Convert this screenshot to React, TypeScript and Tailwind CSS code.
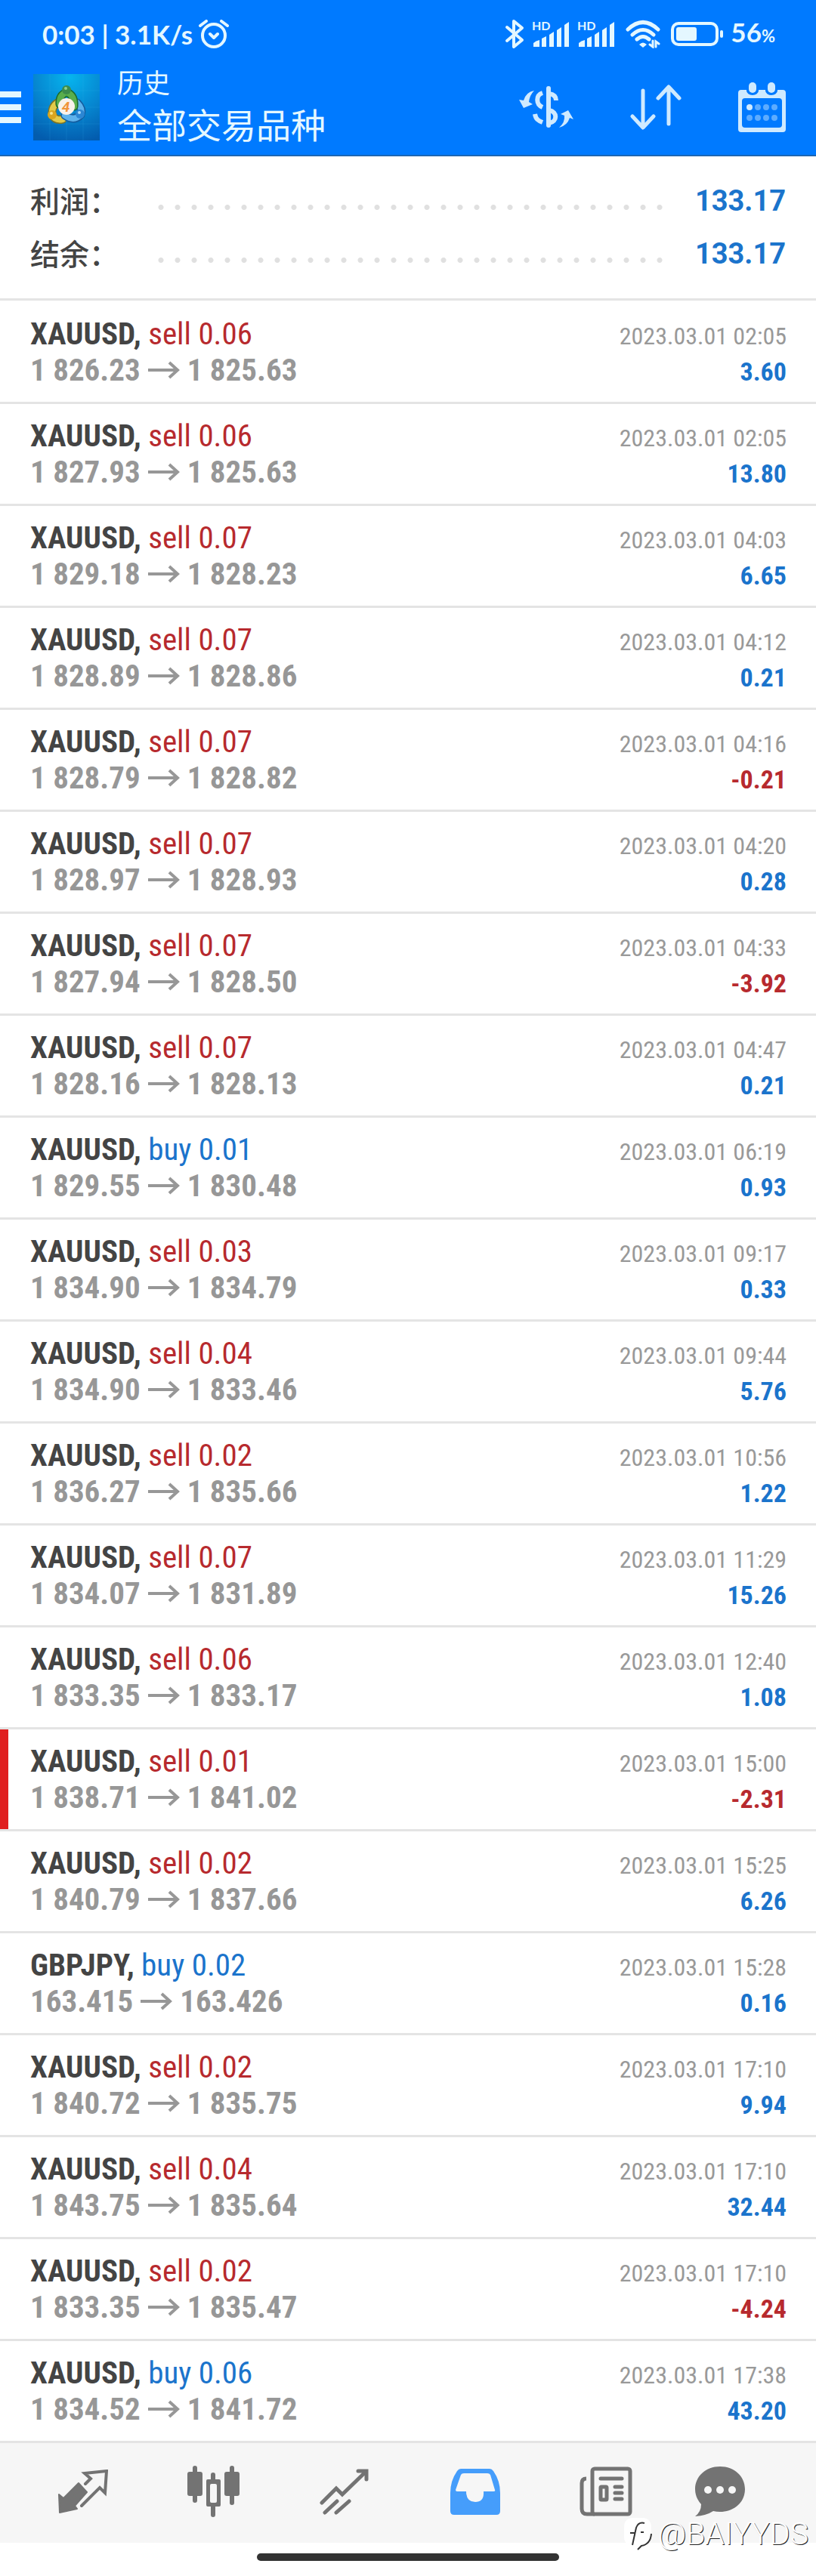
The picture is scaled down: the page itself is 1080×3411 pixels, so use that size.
import React from "react";

interface Deal {
  symbol: string;
  side: "buy" | "sell";
  volume: string;
  open: string;
  close: string;
  time: string;
  profit: string;
  stopped?: boolean;
}

const DEALS: Deal[] = [
  { symbol: "XAUUSD", side: "sell", volume: "0.06", open: "1 826.23", close: "1 825.63", time: "2023.03.01 02:05", profit: "3.60" },
  { symbol: "XAUUSD", side: "sell", volume: "0.06", open: "1 827.93", close: "1 825.63", time: "2023.03.01 02:05", profit: "13.80" },
  { symbol: "XAUUSD", side: "sell", volume: "0.07", open: "1 829.18", close: "1 828.23", time: "2023.03.01 04:03", profit: "6.65" },
  { symbol: "XAUUSD", side: "sell", volume: "0.07", open: "1 828.89", close: "1 828.86", time: "2023.03.01 04:12", profit: "0.21" },
  { symbol: "XAUUSD", side: "sell", volume: "0.07", open: "1 828.79", close: "1 828.82", time: "2023.03.01 04:16", profit: "-0.21" },
  { symbol: "XAUUSD", side: "sell", volume: "0.07", open: "1 828.97", close: "1 828.93", time: "2023.03.01 04:20", profit: "0.28" },
  { symbol: "XAUUSD", side: "sell", volume: "0.07", open: "1 827.94", close: "1 828.50", time: "2023.03.01 04:33", profit: "-3.92" },
  { symbol: "XAUUSD", side: "sell", volume: "0.07", open: "1 828.16", close: "1 828.13", time: "2023.03.01 04:47", profit: "0.21" },
  { symbol: "XAUUSD", side: "buy", volume: "0.01", open: "1 829.55", close: "1 830.48", time: "2023.03.01 06:19", profit: "0.93" },
  { symbol: "XAUUSD", side: "sell", volume: "0.03", open: "1 834.90", close: "1 834.79", time: "2023.03.01 09:17", profit: "0.33" },
  { symbol: "XAUUSD", side: "sell", volume: "0.04", open: "1 834.90", close: "1 833.46", time: "2023.03.01 09:44", profit: "5.76" },
  { symbol: "XAUUSD", side: "sell", volume: "0.02", open: "1 836.27", close: "1 835.66", time: "2023.03.01 10:56", profit: "1.22" },
  { symbol: "XAUUSD", side: "sell", volume: "0.07", open: "1 834.07", close: "1 831.89", time: "2023.03.01 11:29", profit: "15.26" },
  { symbol: "XAUUSD", side: "sell", volume: "0.06", open: "1 833.35", close: "1 833.17", time: "2023.03.01 12:40", profit: "1.08" },
  { symbol: "XAUUSD", side: "sell", volume: "0.01", open: "1 838.71", close: "1 841.02", time: "2023.03.01 15:00", profit: "-2.31", stopped: true },
  { symbol: "XAUUSD", side: "sell", volume: "0.02", open: "1 840.79", close: "1 837.66", time: "2023.03.01 15:25", profit: "6.26" },
  { symbol: "GBPJPY", side: "buy", volume: "0.02", open: "163.415", close: "163.426", time: "2023.03.01 15:28", profit: "0.16" },
  { symbol: "XAUUSD", side: "sell", volume: "0.02", open: "1 840.72", close: "1 835.75", time: "2023.03.01 17:10", profit: "9.94" },
  { symbol: "XAUUSD", side: "sell", volume: "0.04", open: "1 843.75", close: "1 835.64", time: "2023.03.01 17:10", profit: "32.44" },
  { symbol: "XAUUSD", side: "sell", volume: "0.02", open: "1 833.35", close: "1 835.47", time: "2023.03.01 17:10", profit: "-4.24" },
  { symbol: "XAUUSD", side: "buy", volume: "0.06", open: "1 834.52", close: "1 841.72", time: "2023.03.01 17:38", profit: "43.20" },
];

export default function App() {
  return (
    <div className="relative w-full bg-white font-[Roboto,'Noto_Sans_CJK_SC',sans-serif]">
      <header className="border-b-2 border-[#1c66b3] bg-[#007aff] text-[#e4f7ff]">
        <StatusBar />
        <TitleBar />
      </header>

      <main>
        {/* Totals */}
        <dl className="border-b-3 border-[#e4e4e4] py-6 pr-10 pl-10">
          <SummaryLine label="利润：" value="133.17" />
          <SummaryLine label="结余：" value="133.17" />
        </dl>

        <ul className="pt-0.5 font-['Roboto_Condensed','Liberation_Sans_Narrow',Roboto,sans-serif]">
          {DEALS.map((deal, i) => (
            <DealRow key={i} deal={deal} />
          ))}
        </ul>
      </main>

      <TabBar />

      {/* Gesture bar */}
      <div className="flex h-11 justify-center pt-[14px]">
        <div className="h-[10px] w-[400px] rounded-full bg-[#333333]" />
      </div>

      <Watermark />
    </div>
  );
}

function StatusBar() {
  return (
    <div className="flex h-[90px] items-center justify-between pr-[54px] pl-14">
      <div className="flex items-center gap-2 font-[Lato] text-[35px] leading-10 font-bold">
        <span>0:03 | 3.1K/s</span>
        <svg width="40" height="38" viewBox="0 0 40 38" fill="none" stroke="currentColor" strokeWidth="4" strokeLinecap="round" strokeLinejoin="round">
          <circle cx="20" cy="21" r="15" />
          <path d="M15 19l5 5 5-5M2 8l8-6M38 8l-8-6" />
        </svg>
      </div>

      <div className="flex items-center gap-[10px]">
        <svg width="26" height="40" viewBox="0 0 26 40" fill="none" stroke="currentColor" strokeWidth="4" strokeLinecap="round" strokeLinejoin="round">
          <path d="M3 11l20 17-11 9V3l11 9L3 29" />
        </svg>
        <SignalIcon />
        <SignalIcon />
        <svg className="ml-1" width="46" height="38" viewBox="0 0 46 38" fill="none" stroke="currentColor" strokeWidth="5" strokeLinecap="round">
          <path d="M3 13Q23 -6 43 13M9 20Q23 7 37 20M15 26Q23 19 31 26" />
          <path d="M18 33q5-5 10 0l-5 4z" fill="currentColor" stroke="none" />
          <path d="M36 28v8l-4-3M40 36v-7l4 3" strokeWidth="3" />
        </svg>
        <svg className="ml-1" width="69" height="32" viewBox="0 0 69 32">
          <rect x="2" y="2" width="59" height="28" rx="8" fill="none" stroke="currentColor" strokeWidth="4" />
          <rect x="7" y="7" width="27" height="18" rx="3" fill="currentColor" />
          <rect x="65" y="11" width="4" height="10" rx="2" fill="currentColor" />
        </svg>
        <span className="font-[Lato] text-[35px] leading-10 font-bold">
          56<span className="text-[22px]">%</span>
        </span>
      </div>
    </div>
  );
}

function SignalIcon() {
  return (
    <svg width="50" height="46" viewBox="0 -6 50 46" fill="currentColor">
      <text x="0" y="12" fontFamily="Lato" fontWeight="700" fontSize="16">HD</text>
      <path d="M2 34V29q3-3 8-4v9zM13 34V23l6-3v14zM23 34V18l6-4v20zM33 34V12l6-4v26zM43 34V5l6-4v33z" />
    </svg>
  );
}

function TitleBar() {
  return (
    <div className="flex h-[115px] items-center pr-10 pb-3">
      <button aria-label="Menu" className="flex w-7 flex-col gap-[9px]">
        <span className="h-2 w-full bg-current" />
        <span className="h-2 w-full bg-current" />
        <span className="h-2 w-full bg-current" />
      </button>
      <AppLogo />
      <div className="ml-[23px] flex flex-1 flex-col pb-2 font-['Noto_Sans_CJK_SC',sans-serif]">
        <span className="text-[35px] leading-[50px]">历史</span>
        <h1 className="text-[46px] leading-[60px]">全部交易品种</h1>
      </div>
      <div className="flex items-center gap-[75px] text-[#cfeaff]">
        <button aria-label="Currency">
          <svg width="72" height="56" viewBox="0 0 72 56" fill="none" stroke="currentColor" strokeWidth="6">
            <path d="M39 3v49" strokeLinecap="round" />
            <path d="M40 10C46 11 49 14 49 19" />
            <path d="M40 32C51 34 51 47 40 49" />
            <path d="M31 9C22 12 22 24 31 28M21 37C22 44 26 46 31 48" />
            <path d="M0 18l6 11 12-5-5-3Q14 12 20 6 9 8 6 19zM53 55Q61 48 60 39l-5-2 10-5 7 12-5-2Q64 52 53 55z" fill="currentColor" stroke="none" />
          </svg>
        </button>
        <button aria-label="Sort">
          <svg width="68" height="60" viewBox="0 0 68 60" fill="none" stroke="currentColor" strokeWidth="5" strokeLinecap="round" strokeLinejoin="round">
            <path d="M17 8v48M3 42l14 15 14-15M51 52V4M37 18L51 3l14 15" />
          </svg>
        </button>
        <button aria-label="Period">
          <svg width="63" height="66" viewBox="0 0 63 66" fill="currentColor">
            <path fillRule="evenodd" d="M4 10H11V11a8 6 0 0 0 16 0V10H36V11a8 6 0 0 0 16 0V10H59a4 4 0 0 1 4 4V62a4 4 0 0 1-4 4H4a4 4 0 0 1-4-4V14a4 4 0 0 1 4-4zM9 21a4 4 0 0 0-4 4V56a4 4 0 0 0 4 4H54a4 4 0 0 0 4-4V25a4 4 0 0 0-4-4z" />
            <rect x="14" width="10" height="14" rx="5" />
            <rect x="39" width="10" height="14" rx="5" />
            <circle cx="15" cy="33" r="4" />
            <g opacity="0.45">
              <circle cx="26" cy="33" r="4" />
              <circle cx="37" cy="33" r="4" />
              <circle cx="48" cy="33" r="4" />
              <circle cx="15" cy="47" r="4" />
              <circle cx="26" cy="47" r="4" />
              <circle cx="37" cy="47" r="4" />
              <circle cx="48" cy="47" r="4" />
            </g>
          </svg>
        </button>
      </div>
    </div>
  );
}

function AppLogo() {
  return (
    <svg className="ml-4" width="88" height="88" viewBox="0 0 88 88">
      <defs>
        <radialGradient id="sky" cx="0.55" cy="0.05" r="1">
          <stop offset="0" stopColor="#06b4ee" />
          <stop offset="0.55" stopColor="#0685cf" />
          <stop offset="1" stopColor="#035cae" />
        </radialGradient>
      </defs>
      <rect width="88" height="88" fill="url(#sky)" />
      <path d="M22 0v88M44 0v88M66 0v88M0 22h88M0 44h88M0 66h88" stroke="#4cc4f5" strokeOpacity="0.15" />
      <g fill="none" strokeLinecap="round">
        <path d="M34 37Q24 42 25 54 29 62 39 60" stroke="#7d7426" strokeWidth="11" />
        <path d="M34 37Q24 42 25 54 29 62 39 60" stroke="#e2cb4a" strokeWidth="8" />
        <path d="M58 38Q66 46 63 54 54 63 42 55" stroke="#155c9e" strokeWidth="11" />
        <path d="M58 38Q66 46 63 54 54 63 42 55" stroke="#5db2ec" strokeWidth="8" />
        <path d="M35 40Q34 28 44 24 55 28 54 43" stroke="#1c6a2c" strokeWidth="11" />
        <path d="M35 40Q34 28 44 24 55 28 54 43" stroke="#59ae4c" strokeWidth="8" />
      </g>
      <ellipse cx="44" cy="21" rx="6" ry="6" fill="#3c8c4c" />
      <ellipse cx="43" cy="19" rx="2" ry="2" fill="#8fd08c" />
      <ellipse cx="25" cy="54" rx="6" ry="6" fill="#d9a51e" />
      <ellipse cx="24" cy="52" rx="2" ry="2" fill="#f7e38a" />
      <ellipse cx="62" cy="53" rx="6" ry="6" fill="#2b86d3" />
      <ellipse cx="61" cy="51" rx="2" ry="2" fill="#a6d8fb" />
      <circle cx="44" cy="43" r="11" fill="#f8f1ea" />
      <text x="43" y="50" textAnchor="middle" fontFamily="Roboto" fontWeight="700" fontSize="19" fontStyle="italic" fill="#f0943a">4</text>
    </svg>
  );
}

function SummaryLine({ label, value }: { label: string; value: string }) {
  return (
    <div className="flex h-[70px] items-center">
      <dt className="w-[162px] pb-1 font-['Noto_Sans_CJK_SC',sans-serif] text-[39px] leading-[66px] font-medium text-[#444444]">{label}</dt>
      <span className="mt-4 h-[7px] flex-1 bg-[radial-gradient(circle,#e0e0e0_3px,transparent_4px)] bg-[length:22px_7px]" />
      <dd className="w-[156px] text-right text-[38px] leading-[70px] font-bold text-[#1b74cc]">{value}</dd>
    </div>
  );
}

function DealRow({ deal }: { deal: Deal }) {
  const sideColor = deal.side === "buy" ? "text-[#1b74cc]" : "text-[#b72a2e]";
  const profitColor = deal.profit.startsWith("-") ? "text-[#b72a2e]" : "text-[#1b74cc]";

  return (
    <li className="relative border-b-3 border-[#e4e4e4] py-[18px] pr-[39px] pl-10">
      {deal.stopped && <span className="absolute inset-y-0 left-0 w-[11px] bg-[#e01e1e]" />}
      <div className="flex h-12 items-baseline justify-between leading-12">
        <span className="text-[41px] text-[#444444]">
          <b className="font-bold">{deal.symbol},</b> <span className={sideColor}>{deal.side} {deal.volume}</span>
        </span>
        <time className="text-[32px] text-[#999999]">{deal.time}</time>
      </div>
      <div className="flex h-12 items-baseline justify-between leading-12 font-bold">
        <span className="flex items-center gap-[10px] text-[41px] text-[#979797]">
          {deal.open}
          <svg width="42" height="24" viewBox="0 0 42 24" fill="none" stroke="currentColor" strokeWidth="4">
            <path d="M0 12h38M28 2l11 10-11 10" />
          </svg>
          {deal.close}
        </span>
        <span className={`text-[34px] ${profitColor}`}>{deal.profit}</span>
      </div>
    </li>
  );
}

function TabBar() {
  return (
    <nav className="flex h-[132px] items-center bg-[#f6f6f6] pr-[62px] pb-1 pl-[23px] text-[#737373]">
      <button aria-label="Quotes" className="flex flex-[173] justify-center">
        <svg width="66" height="59" viewBox="0 0 66 59" fill="none" stroke="currentColor" strokeWidth="4" strokeLinecap="round">
          <path d="M1 33l6 5L27 18 38 30 22 48l3 4-23 5z" fill="currentColor" strokeWidth="2" strokeLinejoin="round" />
          <path d="M36 19l7-7-8-7 29-3-2 29-7-7-24 24" />
        </svg>
      </button>
      <button aria-label="Charts" className="flex flex-[173] justify-center">
        <svg width="70" height="68" viewBox="0 0 70 68" fill="none" stroke="currentColor" strokeWidth="6" strokeLinecap="round">
          <path d="M10 3v43M34 12v8M34 54v11M59 3v46" />
          <rect x="0" y="8" width="20" height="32" rx="3" fill="currentColor" stroke="none" />
          <rect x="49" y="8" width="20" height="32" rx="3" fill="currentColor" stroke="none" />
          <path fillRule="evenodd" d="M27 18H42a2 2 0 0 1 2 2V52a2 2 0 0 1-2 2H27a2 2 0 0 1-2-2V20a2 2 0 0 1 2-2zM32 24a2 2 0 0 0-2 2V47a2 2 0 0 0 2 2H37a2 2 0 0 0 2-2V26a2 2 0 0 0-2-2z" fill="currentColor" stroke="none" />
        </svg>
      </button>
      <button aria-label="Trade" className="flex flex-[173] justify-center">
        <svg width="66" height="61" viewBox="0 0 66 61" fill="none" stroke="currentColor" strokeWidth="5" strokeLinecap="round">
          <path d="M3 45L22 26l8 8L61 4M51 3H62V14M7 58L23 43M22 58L39 43" />
        </svg>
      </button>
      <button aria-label="History" className="flex flex-[173] justify-center text-[#459dfb]">
        <svg width="66" height="61" viewBox="0 0 66 61" fill="currentColor">
          <path fillRule="evenodd" d="M14 0H52Q55 0 57 3 66 16 66 32V56Q66 61 61 61H5Q0 61 0 56V32Q0 16 9 3 11 0 14 0zM18 6Q15 6 14 8L7 28Q7 30 9 30H21Q21 44 33 44T44 30H57Q60 30 59 28L53 8Q52 6 49 6z" />
        </svg>
      </button>
      <button aria-label="News" className="flex flex-[173] justify-center">
        <svg width="70" height="66" viewBox="0 0 70 66" fill="none" stroke="currentColor" strokeWidth="5" strokeLinecap="round">
          <rect x="17" y="3" width="50" height="60" rx="3" />
          <path d="M9 16Q3 16 3 22V56Q3 63 10 63H20" strokeLinecap="butt" />
          <path d="M28 16H56M47 27H56M47 35H56M47 43H56" />
          <rect x="28" y="27" width="8" height="17" rx="1" />
        </svg>
      </button>
      <button aria-label="Messages" className="flex flex-[130] justify-center">
        <svg width="66" height="66" viewBox="0 0 66 66">
          <path d="M33 0C52 0 66 13 66 30S52 60 33 60q-5 0-9-1Q15 65 0 66 8 60 8 50 0 41 0 30C0 13 14 0 33 0z" fill="currentColor" />
          <circle cx="17" cy="31" r="5" fill="#f6f6f6" />
          <circle cx="33" cy="31" r="5" fill="#f6f6f6" />
          <circle cx="49" cy="31" r="5" fill="#f6f6f6" />
        </svg>
      </button>
    </nav>
  );
}

function Watermark() {
  return (
    <div className="absolute right-[10px] bottom-8 flex items-center gap-2 text-white">
      <svg width="38" height="44" viewBox="0 0 38 44" fill="none">
        <path d="M12 1H26Q37 2 37 14V22Q37 38 20 43L16 38Q1 39 1 26V13Q1 2 12 1z" fill="#ffffff" />
        <path d="M28 8Q20 6 17 14L12 37M9 21H15M23 20H27M37 22Q36 36 24 38L19 43" stroke="#333333" strokeWidth="2" />
      </svg>
      <span className="font-[Roboto] text-[41px] leading-12 font-light [text-shadow:1px_1px_0_#222222]">@BAIYYDS</span>
    </div>
  );
}
